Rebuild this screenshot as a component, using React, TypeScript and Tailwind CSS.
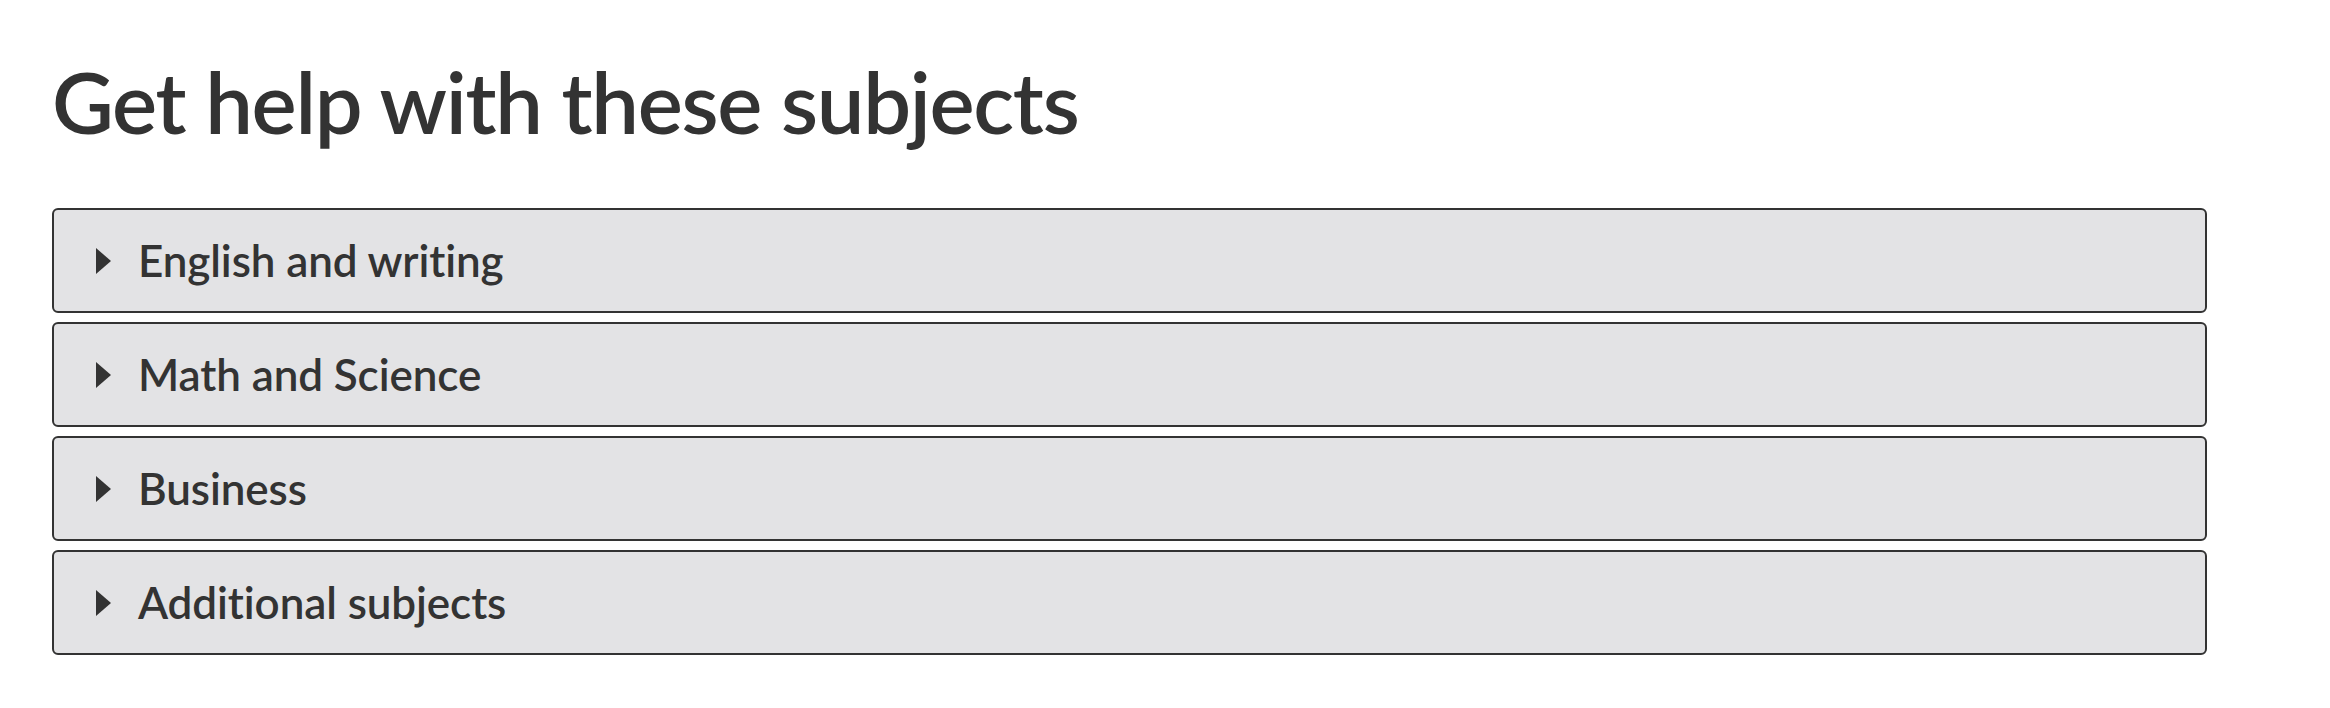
import React from "react";

const subjects = ["English and writing", "Math and Science", "Business", "Additional subjects"];

function Triangle() {
  return (
    <svg width="15" height="26" viewBox="0 0 15 26" className="shrink-0" aria-hidden="true">
      <polygon points="0,0 15,13 0,26" fill="#333333" />
    </svg>
  );
}

export default function App() {
  return (
    <div
      className="min-h-[708px] bg-white pl-[52px] pt-[50px] text-[#333333] [font-variant-ligatures:none]"
      style={{ fontFamily: "Lato, 'Open Sans', sans-serif" }}
    >
      <h1 className="m-0 text-[85px] font-semibold leading-[1.2] tracking-[-1.3px]">Get help with these subjects</h1>
      <div className="mt-[56px] flex w-[2155px] flex-col gap-[9px]">
        {subjects.map((s) => (
          <div
            key={s}
            className="flex h-[105px] items-center gap-[27px] rounded-[6px] border-2 border-[#333333] bg-[#e3e3e5] pl-[42px]"
          >
            <Triangle />
            <span className="text-[44px] font-semibold leading-[1.2] tracking-[-0.1px]">{s}</span>
          </div>
        ))}
      </div>
    </div>
  );
}
